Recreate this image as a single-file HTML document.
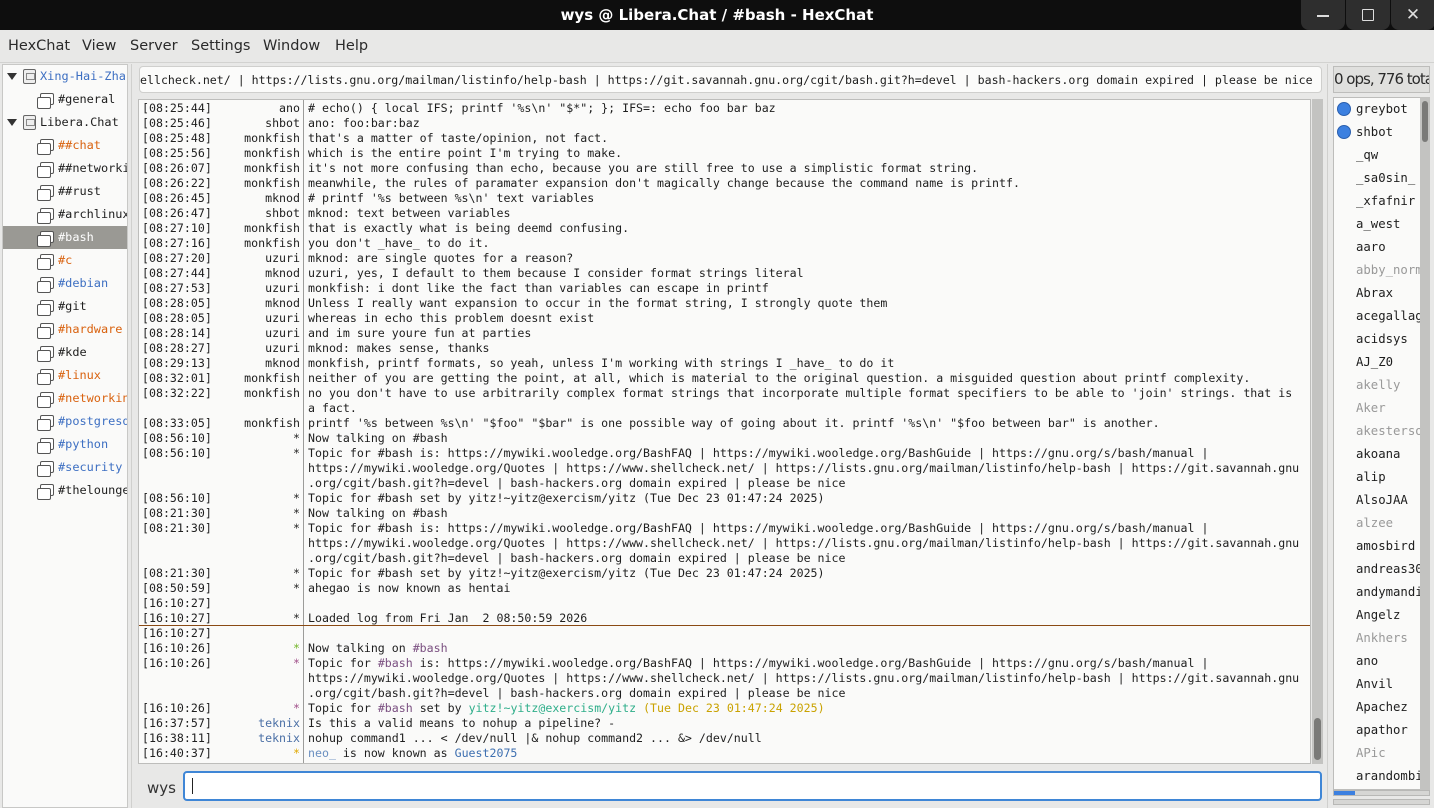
<!DOCTYPE html>
<html><head><meta charset="utf-8"><style>
*{margin:0;padding:0;box-sizing:border-box}
body{width:1434px;height:808px;background:#e8e8e7;position:relative;overflow:hidden;font-family:"DejaVu Sans",sans-serif}
.abs{position:absolute}
#title{left:0;top:0;width:1434px;height:30px;background:#0e0e0e;color:#fff;font:bold 15px "DejaVu Sans",sans-serif;text-align:center;line-height:30px}
.wb{top:0;width:44px;height:30px;background:#2e2e2e;border-radius:0 0 8px 8px}
#menu{left:0;top:30px;height:32px;width:1434px;font-size:14.5px;color:#2a2a2a}
#menu span{position:absolute;top:8px}
#tree{left:2px;top:64px;width:126px;height:744px;background:#fafaf9;border:1px solid #c8c8c6;overflow:hidden}
.ti{position:absolute;left:0;width:126px;height:23px;font:11.9px/23px "DejaVu Sans Mono",monospace;white-space:nowrap;color:#1e1e1e}
.ic{position:absolute;top:5px;width:14px;height:12px;border:1.3px solid #555;border-radius:2px;background:#fff}
.ic:after{content:"";position:absolute;left:-4px;top:3px;width:12px;height:10px;border:1.3px solid #555;border-radius:2px;background:#fff}
.srv{position:absolute;top:4px;width:13px;height:15px;border:1.3px solid #666;border-radius:2px;background:#eee}
.srv:after{content:"";position:absolute;left:2px;top:3px;width:7px;height:5px;border:1px solid #888}
.tri{position:absolute;left:4px;top:8px;width:0;height:0;border-left:5px solid transparent;border-right:5px solid transparent;border-top:7px solid #333}
.or{color:#d9620f}.bl{color:#3d6fc2}
#topic{left:139px;top:66px;width:1183px;height:27px;background:#fbfbfa;border:1px solid #cfcfcd;border-radius:4px;font:11.6px/26px "DejaVu Sans Mono",monospace;white-space:pre;overflow:hidden;color:#1e1e1e}
#chat{left:138px;top:99px;width:1173px;height:665px;background:#fafaf9;border:1px solid #bdbdbb;overflow:hidden}
.l{position:relative;height:15px;font:11.6px/15px "DejaVu Sans Mono",monospace;color:#1e1e1e;white-space:pre}
.t{position:absolute;left:3px}
.n{position:absolute;right:1010px;text-align:right}
.x{position:absolute;left:169px}
#sep{left:303px;top:100px;width:1px;height:663px;background:#9c9c9a}
#mark{left:139px;top:625px;width:1171px;height:1px;background:#8a4a14}
#sb{left:1312px;top:99px;width:11px;height:665px;background:#c3c3c1}
#input{left:183px;top:771px;width:1139px;height:30px;background:#fff;border:2px solid #3f86d6;border-radius:4px}
#hdr{left:1333px;top:66px;width:97px;height:27px;background:#e0e0de;border:1px solid #bdbdbb;font:15px/25px "DejaVu Sans",sans-serif;color:#2a2a2a;white-space:nowrap;overflow:hidden;letter-spacing:-1px}
#ul{left:1333px;top:97px;width:88px;height:693px;background:#fafaf9;border:1px solid #bdbdbb;overflow:hidden}
.u{position:absolute;left:22px;font:12.3px/23px "DejaVu Sans Mono",monospace;white-space:nowrap;color:#1e1e1e}
.g{color:#999}
.dot{position:absolute;left:3px;width:14px;height:14px;border-radius:50%;background:#3c80e0;border:1px solid #2a5fae}
</style></head><body>
<div id="title" class="abs">wys @ Libera.Chat / #bash - HexChat</div>
<div class="abs wb" style="left:1301px"><div class="abs" style="left:16px;top:15px;width:12px;height:1.5px;background:#ddd"></div></div>
<div class="abs wb" style="left:1346px"><div class="abs" style="left:16px;top:9px;width:12px;height:12px;border:1.5px solid #ddd;border-radius:1px"></div></div>
<div class="abs wb" style="left:1391px;color:#ddd;font-size:17px;text-align:center;line-height:30px">✕</div>
<div id="menu" class="abs"><span style="left:8px">HexChat</span><span style="left:82px">View</span><span style="left:130px">Server</span><span style="left:191px">Settings</span><span style="left:263px">Window</span><span style="left:335px">Help</span></div>
<div class="abs" style="left:0;top:62px;width:1434px;height:1px;background:#d2d2d0"></div>

<div id="tree" class="abs">
<div class="ti" style="top:0"><div class="tri"></div><div class="srv" style="left:20px"></div><span class="abs bl" style="left:37px">Xing-Hai-Zhan</span></div>
<div class="ti" style="top:23px"><div class="ic" style="left:37px"></div><span class="abs" style="left:55px">#general</span></div>
<div class="ti" style="top:46px"><div class="tri"></div><div class="srv" style="left:20px"></div><span class="abs" style="left:37px">Libera.Chat</span></div>
<div class="ti" style="top:69px"><div class="ic" style="left:37px"></div><span class="abs or" style="left:55px">##chat</span></div>
<div class="ti" style="top:92px"><div class="ic" style="left:37px"></div><span class="abs" style="left:55px">##networking</span></div>
<div class="ti" style="top:115px"><div class="ic" style="left:37px"></div><span class="abs" style="left:55px">##rust</span></div>
<div class="ti" style="top:138px"><div class="ic" style="left:37px"></div><span class="abs" style="left:55px">#archlinux</span></div>
<div class="ti" style="top:161px;background:#9a9994"><div class="ic" style="left:37px"></div><span class="abs" style="left:55px;color:#fff">#bash</span></div>
<div class="ti" style="top:184px"><div class="ic" style="left:37px"></div><span class="abs or" style="left:55px">#c</span></div>
<div class="ti" style="top:207px"><div class="ic" style="left:37px"></div><span class="abs bl" style="left:55px">#debian</span></div>
<div class="ti" style="top:230px"><div class="ic" style="left:37px"></div><span class="abs" style="left:55px">#git</span></div>
<div class="ti" style="top:253px"><div class="ic" style="left:37px"></div><span class="abs or" style="left:55px">#hardware</span></div>
<div class="ti" style="top:276px"><div class="ic" style="left:37px"></div><span class="abs" style="left:55px">#kde</span></div>
<div class="ti" style="top:299px"><div class="ic" style="left:37px"></div><span class="abs or" style="left:55px">#linux</span></div>
<div class="ti" style="top:322px"><div class="ic" style="left:37px"></div><span class="abs or" style="left:55px">#networking</span></div>
<div class="ti" style="top:345px"><div class="ic" style="left:37px"></div><span class="abs bl" style="left:55px">#postgresql</span></div>
<div class="ti" style="top:368px"><div class="ic" style="left:37px"></div><span class="abs bl" style="left:55px">#python</span></div>
<div class="ti" style="top:391px"><div class="ic" style="left:37px"></div><span class="abs bl" style="left:55px">#security</span></div>
<div class="ti" style="top:414px"><div class="ic" style="left:37px"></div><span class="abs" style="left:55px">#thelounge</span></div>
</div>
<div class="abs" style="left:131px;top:64px;width:1px;height:744px;background:#d0d0ce"></div>

<div id="topic" class="abs">ellcheck.net/ | https://lists.gnu.org/mailman/listinfo/help-bash | https://git.savannah.gnu.org/cgit/bash.git?h=devel | bash-hackers.org domain expired | please be nice</div>

<div id="chat" class="abs"><div style="height:1px"></div>
<div class="l"><span class="t">[08:25:44]</span><span class="n">ano</span><span class="x"># echo() { local IFS; printf '%s\n' "$*"; }; IFS=: echo foo bar baz</span></div>
<div class="l"><span class="t">[08:25:46]</span><span class="n">shbot</span><span class="x">ano: foo:bar:baz</span></div>
<div class="l"><span class="t">[08:25:48]</span><span class="n">monkfish</span><span class="x">that's a matter of taste/opinion, not fact.</span></div>
<div class="l"><span class="t">[08:25:56]</span><span class="n">monkfish</span><span class="x">which is the entire point I'm trying to make.</span></div>
<div class="l"><span class="t">[08:26:07]</span><span class="n">monkfish</span><span class="x">it's not more confusing than echo, because you are still free to use a simplistic format string.</span></div>
<div class="l"><span class="t">[08:26:22]</span><span class="n">monkfish</span><span class="x">meanwhile, the rules of paramater expansion don't magically change because the command name is printf.</span></div>
<div class="l"><span class="t">[08:26:45]</span><span class="n">mknod</span><span class="x"># printf '%s between %s\n' text variables</span></div>
<div class="l"><span class="t">[08:26:47]</span><span class="n">shbot</span><span class="x">mknod: text between variables</span></div>
<div class="l"><span class="t">[08:27:10]</span><span class="n">monkfish</span><span class="x">that is exactly what is being deemd confusing.</span></div>
<div class="l"><span class="t">[08:27:16]</span><span class="n">monkfish</span><span class="x">you don't _have_ to do it.</span></div>
<div class="l"><span class="t">[08:27:20]</span><span class="n">uzuri</span><span class="x">mknod: are single quotes for a reason?</span></div>
<div class="l"><span class="t">[08:27:44]</span><span class="n">mknod</span><span class="x">uzuri, yes, I default to them because I consider format strings literal</span></div>
<div class="l"><span class="t">[08:27:53]</span><span class="n">uzuri</span><span class="x">monkfish: i dont like the fact than variables can escape in printf</span></div>
<div class="l"><span class="t">[08:28:05]</span><span class="n">mknod</span><span class="x">Unless I really want expansion to occur in the format string, I strongly quote them</span></div>
<div class="l"><span class="t">[08:28:05]</span><span class="n">uzuri</span><span class="x">whereas in echo this problem doesnt exist</span></div>
<div class="l"><span class="t">[08:28:14]</span><span class="n">uzuri</span><span class="x">and im sure youre fun at parties</span></div>
<div class="l"><span class="t">[08:28:27]</span><span class="n">uzuri</span><span class="x">mknod: makes sense, thanks</span></div>
<div class="l"><span class="t">[08:29:13]</span><span class="n">mknod</span><span class="x">monkfish, printf formats, so yeah, unless I'm working with strings I _have_ to do it</span></div>
<div class="l"><span class="t">[08:32:01]</span><span class="n">monkfish</span><span class="x">neither of you are getting the point, at all, which is material to the original question. a misguided question about printf complexity.</span></div>
<div class="l"><span class="t">[08:32:22]</span><span class="n">monkfish</span><span class="x">no you don't have to use arbitrarily complex format strings that incorporate multiple format specifiers to be able to 'join' strings. that is</span></div>
<div class="l"><span class="x">a fact.</span></div>
<div class="l"><span class="t">[08:33:05]</span><span class="n">monkfish</span><span class="x">printf '%s between %s\n' "$foo" "$bar" is one possible way of going about it. printf '%s\n' "$foo between bar" is another.</span></div>
<div class="l"><span class="t">[08:56:10]</span><span class="n">*</span><span class="x">Now talking on #bash</span></div>
<div class="l"><span class="t">[08:56:10]</span><span class="n">*</span><span class="x">Topic for #bash is: https://mywiki.wooledge.org/BashFAQ | https://mywiki.wooledge.org/BashGuide | https://gnu.org/s/bash/manual |</span></div>
<div class="l"><span class="x">https://mywiki.wooledge.org/Quotes | https://www.shellcheck.net/ | https://lists.gnu.org/mailman/listinfo/help-bash | https://git.savannah.gnu</span></div>
<div class="l"><span class="x">.org/cgit/bash.git?h=devel | bash-hackers.org domain expired | please be nice</span></div>
<div class="l"><span class="t">[08:56:10]</span><span class="n">*</span><span class="x">Topic for #bash set by yitz!~yitz@exercism/yitz (Tue Dec 23 01:47:24 2025)</span></div>
<div class="l"><span class="t">[08:21:30]</span><span class="n">*</span><span class="x">Now talking on #bash</span></div>
<div class="l"><span class="t">[08:21:30]</span><span class="n">*</span><span class="x">Topic for #bash is: https://mywiki.wooledge.org/BashFAQ | https://mywiki.wooledge.org/BashGuide | https://gnu.org/s/bash/manual |</span></div>
<div class="l"><span class="x">https://mywiki.wooledge.org/Quotes | https://www.shellcheck.net/ | https://lists.gnu.org/mailman/listinfo/help-bash | https://git.savannah.gnu</span></div>
<div class="l"><span class="x">.org/cgit/bash.git?h=devel | bash-hackers.org domain expired | please be nice</span></div>
<div class="l"><span class="t">[08:21:30]</span><span class="n">*</span><span class="x">Topic for #bash set by yitz!~yitz@exercism/yitz (Tue Dec 23 01:47:24 2025)</span></div>
<div class="l"><span class="t">[08:50:59]</span><span class="n">*</span><span class="x">ahegao is now known as hentai</span></div>
<div class="l"><span class="t">[16:10:27]</span></div>
<div class="l"><span class="t">[16:10:27]</span><span class="n">*</span><span class="x">Loaded log from Fri Jan  2 08:50:59 2026</span></div>
<div class="l"><span class="t">[16:10:27]</span></div>
<div class="l"><span class="t">[16:10:26]</span><span class="n" style="color:#73b52a">*</span><span class="x">Now talking on <span style="color:#7a4f80">#bash</span></span></div>
<div class="l"><span class="t">[16:10:26]</span><span class="n" style="color:#a0508a">*</span><span class="x">Topic for <span style="color:#7a4f80">#bash</span> is: https://mywiki.wooledge.org/BashFAQ | https://mywiki.wooledge.org/BashGuide | https://gnu.org/s/bash/manual |</span></div>
<div class="l"><span class="x">https://mywiki.wooledge.org/Quotes | https://www.shellcheck.net/ | https://lists.gnu.org/mailman/listinfo/help-bash | https://git.savannah.gnu</span></div>
<div class="l"><span class="x">.org/cgit/bash.git?h=devel | bash-hackers.org domain expired | please be nice</span></div>
<div class="l"><span class="t">[16:10:26]</span><span class="n" style="color:#a0508a">*</span><span class="x">Topic for <span style="color:#7a4f80">#bash</span> set by <span style="color:#2fae8a">yitz!~yitz@exercism/yitz</span> <span style="color:#c9a200">(Tue Dec 23 01:47:24 2025)</span></span></div>
<div class="l"><span class="t">[16:37:57]</span><span class="n" style="color:#4a6fa5">teknix</span><span class="x">Is this a valid means to nohup a pipeline? -</span></div>
<div class="l"><span class="t">[16:38:11]</span><span class="n" style="color:#4a6fa5">teknix</span><span class="x">nohup command1 ... &lt; /dev/null |&amp; nohup command2 ... &amp;&gt; /dev/null</span></div>
<div class="l"><span class="t">[16:40:37]</span><span class="n" style="color:#e0a800">*</span><span class="x"><span style="color:#6a8fc0">neo_</span> is now known as <span style="color:#3d6fb0">Guest2075</span></span></div>
</div>
<div id="sep" class="abs"></div>
<div id="mark" class="abs"></div>
<div id="sb" class="abs"><div class="abs" style="left:2px;top:619px;width:7px;height:42px;background:#7a7a78;border-radius:4px"></div></div>

<div class="abs" style="left:147px;top:779px;font:15px 'DejaVu Sans',sans-serif;color:#333">wys</div>
<div id="input" class="abs"><div class="abs" style="left:7px;top:5px;width:1px;height:16px;background:#222"></div></div>

<div class="abs" style="left:1327px;top:64px;width:1px;height:744px;background:#d0d0ce"></div>
<div id="hdr" class="abs">0 ops, 776 total</div>
<div id="ul" class="abs">
<div class="dot" style="top:4px"></div><div class="u" style="top:0">greybot</div>
<div class="dot" style="top:27px"></div><div class="u" style="top:23px">shbot</div>
<div class="u" style="top:46px">_qw</div>
<div class="u" style="top:69px">_sa0sin_</div>
<div class="u" style="top:92px">_xfafnir</div>
<div class="u" style="top:115px">a_west</div>
<div class="u" style="top:138px">aaro</div>
<div class="u g" style="top:161px">abby_norm</div>
<div class="u" style="top:184px">Abrax</div>
<div class="u" style="top:207px">acegallag</div>
<div class="u" style="top:230px">acidsys</div>
<div class="u" style="top:253px">AJ_Z0</div>
<div class="u g" style="top:276px">akelly</div>
<div class="u g" style="top:299px">Aker</div>
<div class="u g" style="top:322px">akesterso</div>
<div class="u" style="top:345px">akoana</div>
<div class="u" style="top:368px">alip</div>
<div class="u" style="top:391px">AlsoJAA</div>
<div class="u g" style="top:414px">alzee</div>
<div class="u" style="top:437px">amosbird</div>
<div class="u" style="top:460px">andreas30</div>
<div class="u" style="top:483px">andymandi</div>
<div class="u" style="top:506px">Angelz</div>
<div class="u g" style="top:529px">Ankhers</div>
<div class="u" style="top:552px">ano</div>
<div class="u" style="top:575px">Anvil</div>
<div class="u" style="top:598px">Apachez</div>
<div class="u" style="top:621px">apathor</div>
<div class="u g" style="top:644px">APic</div>
<div class="u" style="top:667px">arandombi</div>
</div>
<div class="abs" style="left:1420px;top:97px;width:10px;height:693px;background:#c3c3c1"><div class="abs" style="left:2px;top:4px;width:6px;height:41px;background:#7a7a78;border-radius:3px"></div></div>
<div class="abs" style="left:1333px;top:790px;width:97px;height:6px;background:#d6d6d4;border:1px solid #b8b8b6"><div class="abs" style="left:0;top:0;width:21px;height:4px;background:#3c80e0"></div></div>
<div class="abs" style="left:1333px;top:799px;width:97px;height:6px;background:#d6d6d4;border:1px solid #b8b8b6"></div>
</body></html>
